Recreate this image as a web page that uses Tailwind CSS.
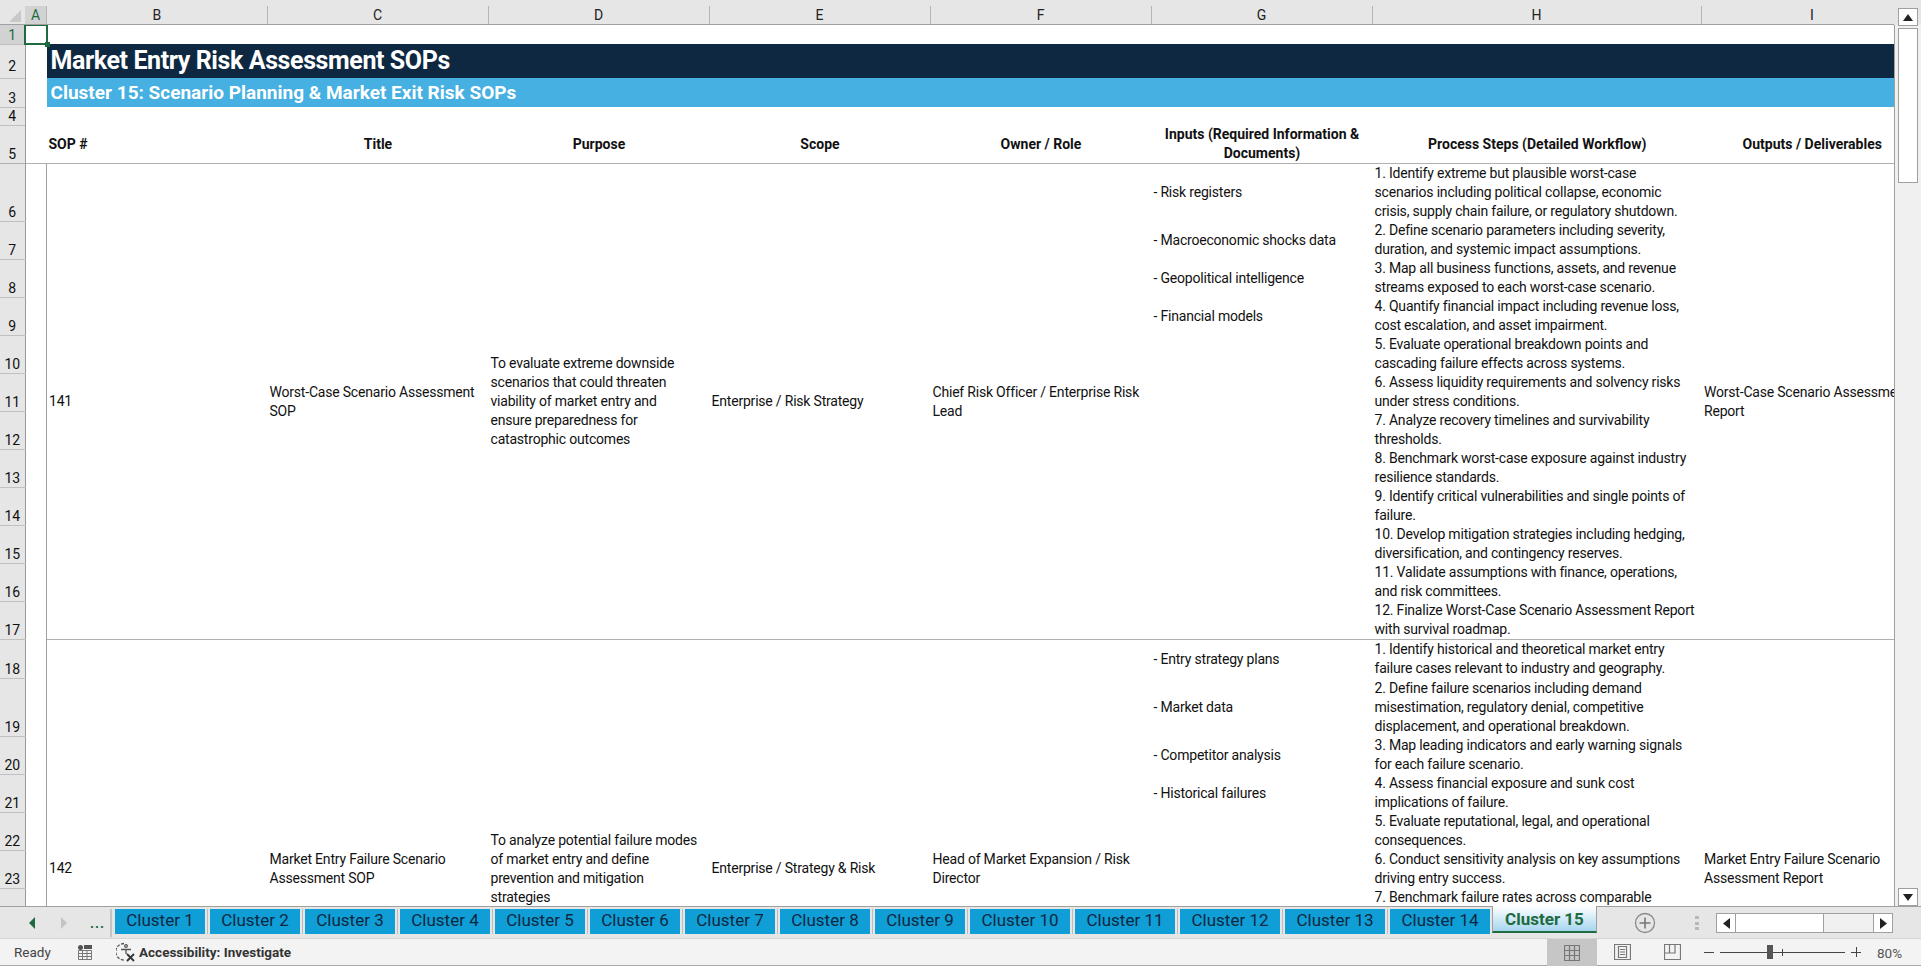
<!DOCTYPE html>
<html lang="en">
<head>
<meta charset="UTF-8">
<title>Market Entry Risk Assessment SOPs</title>
<script src="https://cdn.jsdelivr.net/npm/@tailwindcss/browser@4"></script>
</head>
<body class="w-[1921px] h-[966px] overflow-hidden bg-white font-['Roboto',sans-serif] text-[14px] tracking-[-0.2px] text-[#111]">

<!-- column letters -->
<div class="h-[25px] bg-[#e6e6e6] flex">
  <div class="w-[1894px] h-[25px] pt-[6px] border-b border-[#a0a0a0] flex overflow-hidden text-[14px] tracking-normal leading-[18px] text-[#222]">
    <div class="w-[25px] shrink-0 relative">
      <svg class="absolute left-[8px] top-[3px]" width="14" height="14"><polygon points="13,1 13,13 1,13" fill="#c8c8c8"/></svg>
    </div>
    <div class="w-[22px] shrink-0 text-center bg-[#d2d2d2] text-[#1e6b41] border-r border-[#b5b5b5]">A</div>
    <div class="w-[220.5px] shrink-0 text-center border-r border-[#b5b5b5]">B</div>
    <div class="w-[221px] shrink-0 text-center border-r border-[#b5b5b5]">C</div>
    <div class="w-[221px] shrink-0 text-center border-r border-[#b5b5b5]">D</div>
    <div class="w-[221px] shrink-0 text-center border-r border-[#b5b5b5]">E</div>
    <div class="w-[221px] shrink-0 text-center border-r border-[#b5b5b5]">F</div>
    <div class="w-[221px] shrink-0 text-center border-r border-[#b5b5b5]">G</div>
    <div class="w-[329px] shrink-0 text-center border-r border-[#b5b5b5]">H</div>
    <div class="w-[221px] shrink-0 text-center">I</div>
  </div>
</div>

<div class="flex h-[881px]">
  <!-- sheet -->
  <div class="w-[1894px] h-[881px] overflow-hidden relative">
    <table class="table-fixed border-collapse w-[1894px] leading-[19px]">
      <colgroup>
        <col class="w-[25px]"><col class="w-[21.5px]"><col class="w-[221px]"><col class="w-[221px]"><col class="w-[221px]"><col class="w-[221px]"><col class="w-[221px]"><col class="w-[221px]"><col class="w-[329.5px]"><col class="w-[192.5px]">
      </colgroup>
      <tbody>
        <tr class="h-[19px]">
          <th class="bg-[#d2d2d2] border-r border-[#999] font-normal text-[#1e6b41] align-bottom text-center text-[14px] tracking-normal leading-[18px] p-0">1</th>
          <td class="p-0"></td><td colspan="8" class="p-0"></td>
        </tr>
        <tr class="h-[34px]">
          <th class="bg-[#e6e6e6] border-r border-[#999] border-t border-t-[#c0c0c0] font-normal align-bottom text-center text-[14px] tracking-normal leading-[18px] p-0 pb-[3px]">2</th>
          <td class="p-0"></td>
          <td colspan="8" class="p-0 pl-[4px] bg-[#0f2841] text-white font-bold text-[25px] tracking-[-0.4px] leading-[34px] whitespace-nowrap">Market Entry Risk Assessment SOPs</td>
        </tr>
        <tr class="h-[29px]">
          <th class="bg-[#e6e6e6] border-r border-[#999] border-t border-t-[#c0c0c0] font-normal align-bottom text-center text-[14px] tracking-normal leading-[18px] p-0">3</th>
          <td class="p-0"></td>
          <td colspan="8" class="p-0 pl-[4px] bg-[#45b0e1] text-white font-bold text-[19px] tracking-normal leading-[29px] whitespace-nowrap">Cluster 15: Scenario Planning &amp; Market Exit Risk SOPs</td>
        </tr>
        <tr class="h-[18px]">
          <th class="bg-[#e6e6e6] border-r border-[#999] border-t border-t-[#c0c0c0] font-normal align-bottom text-center text-[14px] tracking-normal leading-[17px] p-0">4</th>
          <td class="p-0"></td><td colspan="8" class="p-0"></td>
        </tr>
        <tr class="h-[38px] border-b border-[#b0b0b0] font-bold tracking-normal">
          <th class="bg-[#e6e6e6] border-r border-[#999] border-t border-t-[#c0c0c0] font-normal align-bottom text-center text-[14px] leading-[18px] p-0">5</th>
          <td class="p-0"></td>
          <td class="p-0 pl-[2px]">SOP #</td>
          <td class="p-0 text-center">Title</td>
          <td class="p-0 text-center">Purpose</td>
          <td class="p-0 text-center">Scope</td>
          <td class="p-0 text-center">Owner / Role</td>
          <td class="p-0 text-center px-[4px]">Inputs (Required Information &amp; Documents)</td>
          <td class="p-0 text-center">Process Steps (Detailed Workflow)</td>
          <td class="p-0 text-center whitespace-nowrap pl-[28px]">Outputs / Deliverables</td>
        </tr>

        <!-- SOP 141 -->
        <tr class="h-[57px]">
          <th class="bg-[#e6e6e6] border-r border-[#999] border-b border-b-[#c0c0c0] font-normal align-bottom text-center text-[14px] tracking-normal leading-[18px] p-0">6</th>
          <td rowspan="12" class="p-0 border-r border-[#a0a0a0]"></td>
          <td rowspan="12" class="p-0 pl-[2px]">141</td>
          <td rowspan="12" class="p-0 px-[2px]">Worst-Case Scenario Assessment SOP</td>
          <td rowspan="12" class="p-0 px-[2px]">To evaluate extreme downside<br>scenarios that could threaten<br>viability of market entry and<br>ensure preparedness for<br>catastrophic outcomes</td>
          <td rowspan="12" class="p-0 px-[2px]">Enterprise / Risk Strategy</td>
          <td rowspan="12" class="p-0 px-[2px]">Chief Risk Officer / Enterprise Risk Lead</td>
          <td class="p-0 px-[2px]">- Risk registers</td>
          <td class="p-0 px-[2px]">1. Identify extreme but plausible worst-case<br>scenarios including political collapse, economic<br>crisis, supply chain failure, or regulatory shutdown.</td>
          <td rowspan="12" class="p-0 px-[2px] whitespace-nowrap overflow-hidden">Worst-Case Scenario Assessment<br>Report</td>
        </tr>
        <tr class="h-[38px]">
          <th class="bg-[#e6e6e6] border-r border-[#999] border-b border-b-[#c0c0c0] font-normal align-bottom text-center text-[14px] tracking-normal leading-[18px] p-0">7</th>
          <td class="p-0 px-[2px]">- Macroeconomic shocks data</td>
          <td class="p-0 px-[2px]">2. Define scenario parameters including severity,<br>duration, and systemic impact assumptions.</td>
        </tr>
        <tr class="h-[38px]">
          <th class="bg-[#e6e6e6] border-r border-[#999] border-b border-b-[#c0c0c0] font-normal align-bottom text-center text-[14px] tracking-normal leading-[18px] p-0">8</th>
          <td class="p-0 px-[2px]">- Geopolitical intelligence</td>
          <td class="p-0 px-[2px]">3. Map all business functions, assets, and revenue<br>streams exposed to each worst-case scenario.</td>
        </tr>
        <tr class="h-[38px]">
          <th class="bg-[#e6e6e6] border-r border-[#999] border-b border-b-[#c0c0c0] font-normal align-bottom text-center text-[14px] tracking-normal leading-[18px] p-0">9</th>
          <td class="p-0 px-[2px]">- Financial models</td>
          <td class="p-0 px-[2px]">4. Quantify financial impact including revenue loss,<br>cost escalation, and asset impairment.</td>
        </tr>
        <tr class="h-[38px]">
          <th class="bg-[#e6e6e6] border-r border-[#999] border-b border-b-[#c0c0c0] font-normal align-bottom text-center text-[14px] tracking-normal leading-[18px] p-0">10</th>
          <td class="p-0"></td>
          <td class="p-0 px-[2px]">5. Evaluate operational breakdown points and<br>cascading failure effects across systems.</td>
        </tr>
        <tr class="h-[38px]">
          <th class="bg-[#e6e6e6] border-r border-[#999] border-b border-b-[#c0c0c0] font-normal align-bottom text-center text-[14px] tracking-normal leading-[18px] p-0">11</th>
          <td class="p-0"></td>
          <td class="p-0 px-[2px]">6. Assess liquidity requirements and solvency risks<br>under stress conditions.</td>
        </tr>
        <tr class="h-[38px]">
          <th class="bg-[#e6e6e6] border-r border-[#999] border-b border-b-[#c0c0c0] font-normal align-bottom text-center text-[14px] tracking-normal leading-[18px] p-0">12</th>
          <td class="p-0"></td>
          <td class="p-0 px-[2px]">7. Analyze recovery timelines and survivability<br>thresholds.</td>
        </tr>
        <tr class="h-[38px]">
          <th class="bg-[#e6e6e6] border-r border-[#999] border-b border-b-[#c0c0c0] font-normal align-bottom text-center text-[14px] tracking-normal leading-[18px] p-0">13</th>
          <td class="p-0"></td>
          <td class="p-0 px-[2px]">8. Benchmark worst-case exposure against industry<br>resilience standards.</td>
        </tr>
        <tr class="h-[38px]">
          <th class="bg-[#e6e6e6] border-r border-[#999] border-b border-b-[#c0c0c0] font-normal align-bottom text-center text-[14px] tracking-normal leading-[18px] p-0">14</th>
          <td class="p-0"></td>
          <td class="p-0 px-[2px]">9. Identify critical vulnerabilities and single points of<br>failure.</td>
        </tr>
        <tr class="h-[38px]">
          <th class="bg-[#e6e6e6] border-r border-[#999] border-b border-b-[#c0c0c0] font-normal align-bottom text-center text-[14px] tracking-normal leading-[18px] p-0">15</th>
          <td class="p-0"></td>
          <td class="p-0 px-[2px]">10. Develop mitigation strategies including hedging,<br>diversification, and contingency reserves.</td>
        </tr>
        <tr class="h-[38px]">
          <th class="bg-[#e6e6e6] border-r border-[#999] border-b border-b-[#c0c0c0] font-normal align-bottom text-center text-[14px] tracking-normal leading-[18px] p-0">16</th>
          <td class="p-0"></td>
          <td class="p-0 px-[2px]">11. Validate assumptions with finance, operations,<br>and risk committees.</td>
        </tr>
        <tr class="h-[38px]">
          <th class="bg-[#e6e6e6] border-r border-[#999] border-b border-b-[#c0c0c0] font-normal align-bottom text-center text-[14px] tracking-normal leading-[18px] p-0">17</th>
          <td class="p-0 border-b border-[#b0b0b0]"></td>
          <td class="p-0 px-[2px] border-b border-[#b0b0b0]">12. Finalize Worst-Case Scenario Assessment Report<br>with survival roadmap.</td>
        </tr>

        <!-- SOP 142 -->
        <tr class="h-[38px]">
          <th class="bg-[#e6e6e6] border-r border-[#999] border-b border-b-[#c0c0c0] font-normal align-bottom text-center text-[14px] tracking-normal leading-[18px] p-0">18</th>
          <td rowspan="12" class="p-0 border-r border-[#a0a0a0]"></td>
          <td rowspan="12" class="p-0 pl-[2px] border-t border-[#b0b0b0]">142</td>
          <td rowspan="12" class="p-0 px-[2px] border-t border-[#b0b0b0]">Market Entry Failure Scenario Assessment SOP</td>
          <td rowspan="12" class="p-0 px-[2px] border-t border-[#b0b0b0]">To analyze potential failure modes<br>of market entry and define<br>prevention and mitigation<br>strategies</td>
          <td rowspan="12" class="p-0 px-[2px] border-t border-[#b0b0b0]">Enterprise / Strategy &amp; Risk</td>
          <td rowspan="12" class="p-0 px-[2px] border-t border-[#b0b0b0]">Head of Market Expansion / Risk Director</td>
          <td class="p-0 px-[2px]">- Entry strategy plans</td>
          <td class="p-0 px-[2px]">1. Identify historical and theoretical market entry<br>failure cases relevant to industry and geography.</td>
          <td rowspan="12" class="p-0 px-[2px] border-t border-[#b0b0b0] whitespace-nowrap overflow-hidden">Market Entry Failure Scenario<br>Assessment Report</td>
        </tr>
        <tr class="h-[58px]">
          <th class="bg-[#e6e6e6] border-r border-[#999] border-b border-b-[#c0c0c0] font-normal align-bottom text-center text-[14px] tracking-normal leading-[18px] p-0">19</th>
          <td class="p-0 px-[2px]">- Market data</td>
          <td class="p-0 px-[2px]">2. Define failure scenarios including demand<br>misestimation, regulatory denial, competitive<br>displacement, and operational breakdown.</td>
        </tr>
        <tr class="h-[38px]">
          <th class="bg-[#e6e6e6] border-r border-[#999] border-b border-b-[#c0c0c0] font-normal align-bottom text-center text-[14px] tracking-normal leading-[18px] p-0">20</th>
          <td class="p-0 px-[2px]">- Competitor analysis</td>
          <td class="p-0 px-[2px]">3. Map leading indicators and early warning signals<br>for each failure scenario.</td>
        </tr>
        <tr class="h-[38px]">
          <th class="bg-[#e6e6e6] border-r border-[#999] border-b border-b-[#c0c0c0] font-normal align-bottom text-center text-[14px] tracking-normal leading-[18px] p-0">21</th>
          <td class="p-0 px-[2px]">- Historical failures</td>
          <td class="p-0 px-[2px]">4. Assess financial exposure and sunk cost<br>implications of failure.</td>
        </tr>
        <tr class="h-[38px]">
          <th class="bg-[#e6e6e6] border-r border-[#999] border-b border-b-[#c0c0c0] font-normal align-bottom text-center text-[14px] tracking-normal leading-[18px] p-0">22</th>
          <td class="p-0"></td>
          <td class="p-0 px-[2px]">5. Evaluate reputational, legal, and operational<br>consequences.</td>
        </tr>
        <tr class="h-[38px]">
          <th class="bg-[#e6e6e6] border-r border-[#999] border-b border-b-[#c0c0c0] font-normal align-bottom text-center text-[14px] tracking-normal leading-[18px] p-0">23</th>
          <td class="p-0"></td>
          <td class="p-0 px-[2px]">6. Conduct sensitivity analysis on key assumptions<br>driving entry success.</td>
        </tr>
        <tr class="h-[38px]">
          <th class="bg-[#e6e6e6] border-r border-[#999] font-normal align-bottom text-center text-[14px] tracking-normal leading-[18px] p-0"></th>
          <td class="p-0"></td>
          <td class="p-0 px-[2px] align-top">7. Benchmark failure rates across comparable</td>
        </tr>
        <tr class="h-[38px]"><th class="bg-[#e6e6e6] border-r border-[#999] p-0"></th><td class="p-0"></td><td class="p-0"></td></tr>
        <tr class="h-[38px]"><th class="bg-[#e6e6e6] border-r border-[#999] p-0"></th><td class="p-0"></td><td class="p-0"></td></tr>
        <tr class="h-[38px]"><th class="bg-[#e6e6e6] border-r border-[#999] p-0"></th><td class="p-0"></td><td class="p-0"></td></tr>
        <tr class="h-[38px]"><th class="bg-[#e6e6e6] border-r border-[#999] p-0"></th><td class="p-0"></td><td class="p-0"></td></tr>
        <tr class="h-[19px]"><th class="bg-[#e6e6e6] border-r border-[#999] p-0"></th><td class="p-0"></td><td class="p-0"></td></tr>
      </tbody>
    </table>
    <!-- A1 selection -->
    <div class="absolute left-[24px] top-[-1px] w-[24px] h-[21px] border-2 border-[#1e6b41]">
      <div class="absolute right-[-4px] bottom-[-4px] w-[5px] h-[5px] bg-[#1e6b41]"></div>
    </div>
  </div>

  <!-- vertical scrollbar -->
  <div class="w-[27px] h-[881px] bg-[#f0f0f0] border-l border-[#a0a0a0] flex flex-col justify-between pl-[3px] relative">
    <div>
      <div class="w-[20px] h-[18px] mt-[-17px] bg-white border border-[#a0a0a0] flex items-center justify-center relative z-10"><svg width="10" height="7"><polygon points="5,0 10,7 0,7" fill="#222"/></svg></div>
      <div class="w-[20px] h-[155px] mt-[2px] bg-white border border-[#a0a0a0]"></div>
    </div>
    <div class="w-[20px] h-[18px] bg-white border border-[#a0a0a0] flex items-center justify-center"><svg width="10" height="7"><polygon points="0,0 10,0 5,7" fill="#222"/></svg></div>
  </div>
</div>

<!-- sheet tabs -->
<div class="h-[32px] bg-[#e6e6e6] border-t border-[#a0a0a0] flex items-start relative tracking-normal">
  <div class="w-[112px] h-[28px] mt-[2px] border-r-2 border-[#c4c4c4] flex items-center relative">
    <svg class="ml-[29px]" width="7" height="12"><polygon points="6,0 6,12 0,6" fill="#1e6b41"/></svg>
    <svg class="ml-[25px]" width="7" height="12"><polygon points="0,0 0,12 6,6" fill="#c4c4c4"/></svg>
    <span class="ml-[22px] text-[#1e6b41] text-[14px] font-bold tracking-[1px]">...</span>
  </div>
  <div class="flex pl-[1px] pt-[2px] text-[#0f2841] text-[17px] leading-[23px] text-center">
    <div class="w-[95px] h-[25px] px-[2px] border-r border-[#bcbcbc] bg-[#0f9ed5] bg-clip-content">Cluster 1</div>
    <div class="w-[95px] h-[25px] px-[2px] border-r border-[#bcbcbc] bg-[#0f9ed5] bg-clip-content">Cluster 2</div>
    <div class="w-[95px] h-[25px] px-[2px] border-r border-[#bcbcbc] bg-[#0f9ed5] bg-clip-content">Cluster 3</div>
    <div class="w-[95px] h-[25px] px-[2px] border-r border-[#bcbcbc] bg-[#0f9ed5] bg-clip-content">Cluster 4</div>
    <div class="w-[95px] h-[25px] px-[2px] border-r border-[#bcbcbc] bg-[#0f9ed5] bg-clip-content">Cluster 5</div>
    <div class="w-[95px] h-[25px] px-[2px] border-r border-[#bcbcbc] bg-[#0f9ed5] bg-clip-content">Cluster 6</div>
    <div class="w-[95px] h-[25px] px-[2px] border-r border-[#bcbcbc] bg-[#0f9ed5] bg-clip-content">Cluster 7</div>
    <div class="w-[95px] h-[25px] px-[2px] border-r border-[#bcbcbc] bg-[#0f9ed5] bg-clip-content">Cluster 8</div>
    <div class="w-[95px] h-[25px] px-[2px] border-r border-[#bcbcbc] bg-[#0f9ed5] bg-clip-content">Cluster 9</div>
    <div class="w-[105px] h-[25px] px-[2px] border-r border-[#bcbcbc] bg-[#0f9ed5] bg-clip-content">Cluster 10</div>
    <div class="w-[105px] h-[25px] px-[2px] border-r border-[#bcbcbc] bg-[#0f9ed5] bg-clip-content">Cluster 11</div>
    <div class="w-[105px] h-[25px] px-[2px] border-r border-[#bcbcbc] bg-[#0f9ed5] bg-clip-content">Cluster 12</div>
    <div class="w-[105px] h-[25px] px-[2px] border-r border-[#bcbcbc] bg-[#0f9ed5] bg-clip-content">Cluster 13</div>
    <div class="w-[104px] h-[25px] pl-[2px] pr-[2px] bg-[#0f9ed5] bg-clip-content">Cluster 14</div>
    <div class="w-[105px] h-[27px] -mt-[3px] bg-linear-to-b from-white to-[#a6d5ee] border-x border-[#a0a0a0] border-b-2 border-b-[#1e6b41] font-bold text-[#1e6b41] leading-[27px]">Cluster 15</div>
  </div>
  <svg class="absolute left-[1634px] top-[5px]" width="22" height="22" viewBox="0 0 22 22" fill="none" stroke="#8a8a8a"><circle cx="11" cy="11" r="9.5" stroke-width="1.3"/><path d="M11 5.500v11M5.500 11h11" stroke-width="1.6" stroke="#777"/></svg>
  <div class="absolute left-[1695px] top-[9px] w-[4px] h-[14px] flex flex-col justify-between">
    <i class="block h-[3px] bg-[#b8b8b8]"></i><i class="block h-[3px] bg-[#b8b8b8]"></i><i class="block h-[3px] bg-[#b8b8b8]"></i>
  </div>
  <div class="absolute left-[1716px] top-[6px] w-[177px] h-[20px] bg-[#f0f0f0] flex border border-[#a0a0a0]">
    <div class="w-[19px] bg-white border-r border-[#a0a0a0] flex items-center justify-center"><svg width="7" height="11"><polygon points="7,0 7,11 0,5.500" fill="#222"/></svg></div>
    <div class="w-[88px] bg-white border-r border-[#a0a0a0]"></div>
    <div class="ml-auto w-[19px] bg-white border-l border-[#a0a0a0] flex items-center justify-center"><svg width="7" height="11"><polygon points="0,0 0,11 7,5.500" fill="#222"/></svg></div>
  </div>
</div>

<!-- status bar -->
<div class="h-[28px] bg-[#f3f3f3] border-t border-[#d4d4d4] border-b border-b-[#a8a8a8] flex items-center text-[13.5px] tracking-normal text-[#444] relative">
  <span class="ml-[14px] w-[63px]">Ready</span>
  <svg width="16" height="16" viewBox="0 0 16 16">
    <circle cx="3.500" cy="3.500" r="2.500" fill="#555"/>
    <rect x="7" y="1" width="8" height="4" fill="#555"/>
    <path d="M1.500 6.500h13v9h-13zM1.500 9.500h13M1.500 12.500h13M5.500 6.500v9M10 6.500v9" fill="none" stroke="#777"/>
  </svg>
  <svg class="ml-[23px]" width="20" height="20" viewBox="0 0 20 20" fill="none" stroke="#555" stroke-width="1.300">
    <path d="M8 1.500A8 8 0 0 0 8 18" stroke-dasharray="3 1.500"/>
    <circle cx="10" cy="4" r="1.300"/>
    <path d="M5 7.500h10M10 7v5"/>
    <path d="M11 12l7 7M18 12l-7 7" stroke="#333" stroke-width="1.800"/>
  </svg>
  <span class="ml-[3px] font-bold text-[#333] text-[13.5px]">Accessibility: Investigate</span>

  <div class="absolute left-[1547px] top-0 w-[50px] h-[27px] bg-[#c6c6c6] flex items-center justify-center">
    <svg width="16" height="16" viewBox="0 0 16 16" fill="none" stroke="#777" stroke-width="1.200"><path d="M.5.5h15v15H.5zM.5 5.500h15M.5 10.500h15M5.500.5v15M10.500.5v15"/></svg>
  </div>
  <svg class="absolute left-[1614px] top-[5px]" width="17" height="16" viewBox="0 0 17 16" fill="none" stroke="#777" stroke-width="1.200"><path d="M.5.5h16v15H.5z"/><path d="M4.500 2.500h8v11h-8zM6 5.500h5M6 8h5M6 10.500h5"/></svg>
  <svg class="absolute left-[1664px] top-[5px]" width="17" height="16" viewBox="0 0 17 16" fill="none" stroke="#777" stroke-width="1.200"><path d="M.5.5h16v15H.5zM.5 9h10.500V.5M5.500 .5v8.500"/></svg>
  <div class="absolute left-[1704px] top-[13px] w-[10px] h-px bg-[#444]"></div>
  <div class="absolute left-[1720px] top-[13px] w-[125px] h-px bg-[#444]"></div>
  <div class="absolute left-[1767px] top-[6px] w-[6px] h-[14px] bg-[#555]"></div>
  <div class="absolute left-[1782px] top-[10px] w-px h-[7px] bg-[#444]"></div>
  <div class="absolute left-[1851px] top-[13px] w-[10px] h-px bg-[#444]"></div>
  <div class="absolute left-[1856px] top-[8px] w-px h-[10px] bg-[#444]"></div>
  <span class="absolute left-[1877px] top-[4px] text-[#555] text-[13.5px]">80%</span>
</div>
</body>
</html>
